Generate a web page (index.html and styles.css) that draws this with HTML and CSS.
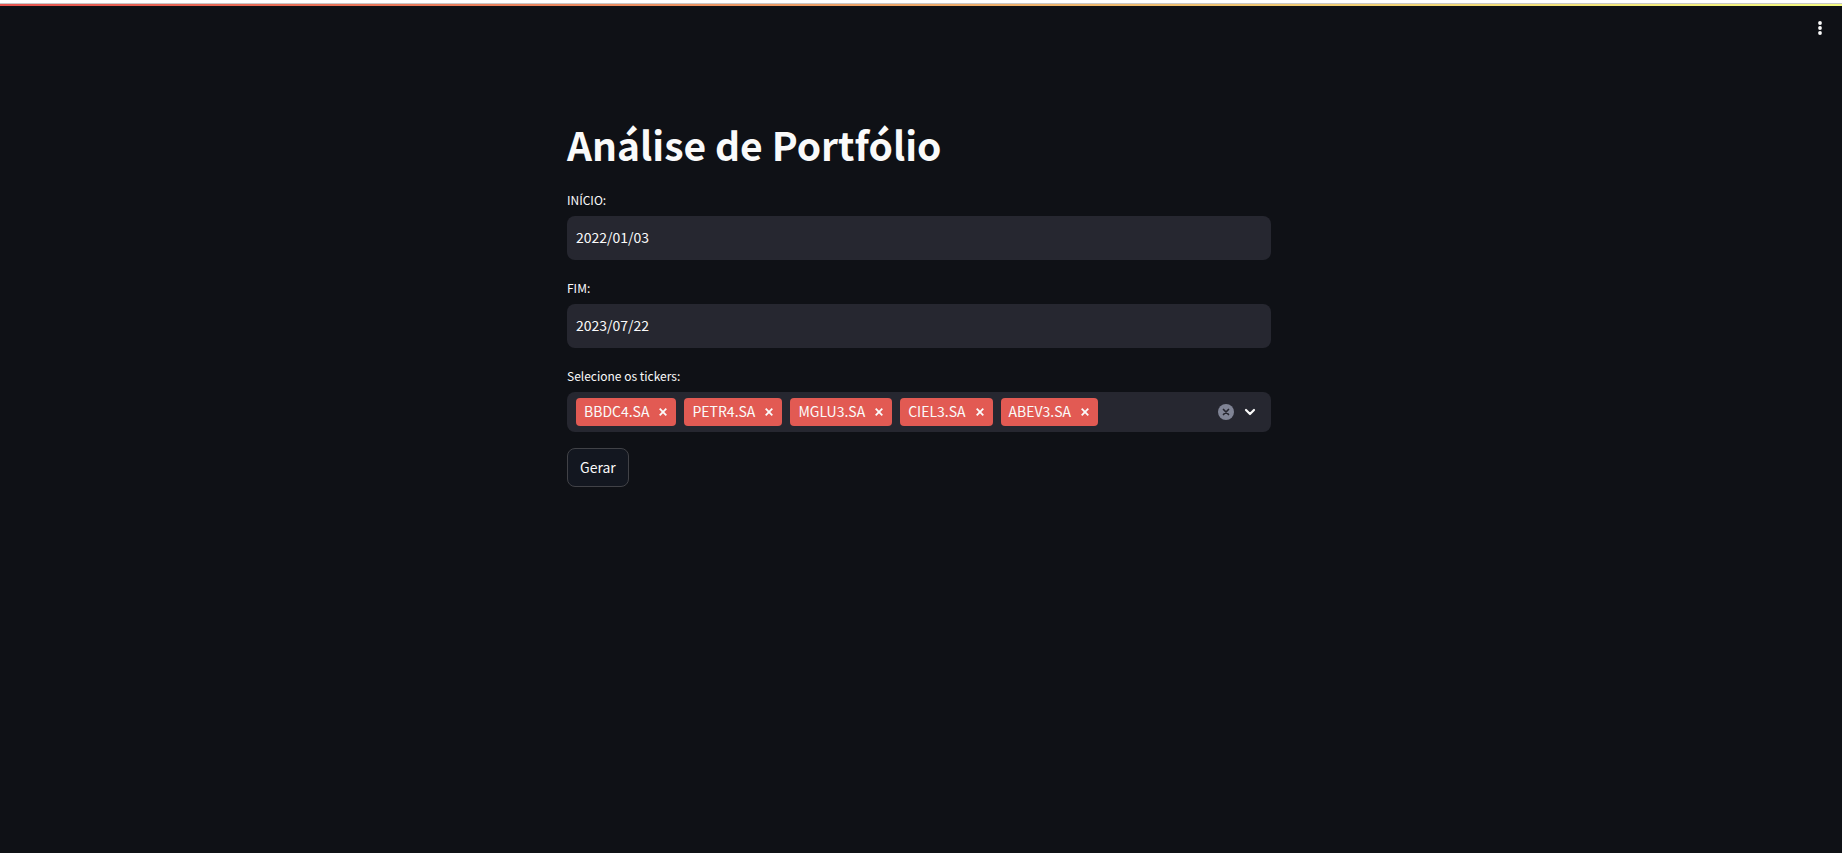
FILE: index.html
```html
<!DOCTYPE html>
<html lang="pt-BR">
<head>
<meta charset="utf-8">
<meta name="viewport" content="width=device-width, initial-scale=1">
<title>Análise de Portfólio</title>
<link rel="stylesheet" href="styles.css">
</head>
<body>
<div class="decoration"></div>
<header class="toolbar">
  <button class="icon-button" type="button" aria-label="Menu">
    <svg width="20" height="20" viewBox="0 0 20 20" fill="currentColor"><circle cx="10" cy="5" r="1.9"/><circle cx="10" cy="10" r="1.9"/><circle cx="10" cy="15" r="1.9"/></svg>
  </button>
</header>
<main class="content">
  <h1 class="title">Análise de Portfólio</h1>
  <form class="form">
    <div class="field">
      <label class="label" for="start">INÍCIO:</label>
      <input class="date" id="start" type="text" value="2022/01/03">
    </div>
    <div class="field">
      <label class="label" for="end">FIM:</label>
      <input class="date" id="end" type="text" value="2023/07/22">
    </div>
    <div class="field">
      <label class="label" for="tickers">Selecione os tickers:</label>
      <div class="multiselect">
        <span class="tag">BBDC4.SA<button class="remove" type="button" aria-label="Remover BBDC4.SA"><svg width="8" height="8" viewBox="0 0 8 8"><path d="M.7.7l6.6 6.6M7.3.7L.7 7.3"/></svg></button></span>
        <span class="tag">PETR4.SA<button class="remove" type="button" aria-label="Remover PETR4.SA"><svg width="8" height="8" viewBox="0 0 8 8"><path d="M.7.7l6.6 6.6M7.3.7L.7 7.3"/></svg></button></span>
        <span class="tag">MGLU3.SA<button class="remove" type="button" aria-label="Remover MGLU3.SA"><svg width="8" height="8" viewBox="0 0 8 8"><path d="M.7.7l6.6 6.6M7.3.7L.7 7.3"/></svg></button></span>
        <span class="tag">CIEL3.SA<button class="remove" type="button" aria-label="Remover CIEL3.SA"><svg width="8" height="8" viewBox="0 0 8 8"><path d="M.7.7l6.6 6.6M7.3.7L.7 7.3"/></svg></button></span>
        <span class="tag">ABEV3.SA<button class="remove" type="button" aria-label="Remover ABEV3.SA"><svg width="8" height="8" viewBox="0 0 8 8"><path d="M.7.7l6.6 6.6M7.3.7L.7 7.3"/></svg></button></span>
        <input class="search" id="tickers" type="text">
        <button class="icon-button clear" type="button" aria-label="Limpar tudo">
          <svg width="16" height="16" viewBox="0 0 16 16"><circle cx="8" cy="8" r="8" fill="#808495"/><path d="M5.5 5.5l5 5M10.5 5.5l-5 5" stroke="#262730" stroke-width="1.7" stroke-linecap="round"/></svg>
        </button>
        <button class="icon-button" type="button" aria-label="Abrir lista">
          <svg width="24" height="24" viewBox="0 0 24 24" fill="none"><path d="M8 10l4 4 4-4" stroke="currentColor" stroke-width="2.2" stroke-linecap="round" stroke-linejoin="round"/></svg>
        </button>
      </div>
    </div>
    <button class="submit" type="button">Gerar</button>
  </form>
</main>
</body>
</html>
```

FILE: styles.css
```css
* {
  box-sizing: border-box;
}

body {
  margin: 0;
  min-height: 100vh;
  background: #0f1116;
  color: #fafafa;
  font-family: "Noto Sans CJK SC", "Noto Sans", sans-serif;
  font-size: 14px;
  line-height: 24px;
}

button,
input {
  margin: 0;
  padding: 0;
  border: 0;
  background: none;
  color: inherit;
  font: inherit;
}

input:focus {
  outline: none;
}

svg {
  display: block;
}

.decoration {
  height: 6px;
  border-top: 3px solid #ffffff;
  background: linear-gradient(#c8c8c8 0 1px, transparent 1px), linear-gradient(90deg, #e65550, #f5fb80);
}

.toolbar {
  display: flex;
  justify-content: flex-end;
  padding: 12px 12px 0;
}

.icon-button {
  display: flex;
  flex: none;
}

.content {
  max-width: 740px;
  margin: 0 auto;
  padding: 78px 20px 40px 16px;
}

.title {
  margin: 0;
  font-size: 39px;
  font-weight: 700;
  line-height: 56px;
}

.form {
  display: flex;
  flex-direction: column;
  align-items: flex-start;
  padding-top: 18px;
}

.field {
  display: flex;
  flex-direction: column;
  gap: 6px;
  width: 100%;
  margin-bottom: 18px;
}

.field:last-of-type {
  margin-bottom: 16px;
}

.label {
  font-size: 12px;
  line-height: 20px;
}

.date {
  width: 100%;
  height: 44px;
  padding: 0 9px 2px;
  border-radius: 8px;
  background: #262730;
}

.multiselect {
  display: flex;
  align-items: center;
  min-height: 40px;
  padding: 6px 9px;
  border-radius: 8px;
  background: #262730;
}

.tag {
  display: flex;
  align-items: center;
  gap: 10px;
  height: 28px;
  margin-right: 8px;
  padding: 0 9px 2px 8px;
  border-radius: 4px;
  background: #e25a53;
  white-space: nowrap;
}

.remove {
  padding-top: 2px;
}

.remove path {
  stroke: currentColor;
  stroke-width: 1.8;
}

.search {
  flex: 1;
  min-width: 20px;
}

.clear {
  margin-right: 4px;
}

.submit {
  height: 39px;
  padding: 0 12px 2px;
  border: 1px solid #414247;
  border-radius: 8px;
  background: #131720;
}
```
